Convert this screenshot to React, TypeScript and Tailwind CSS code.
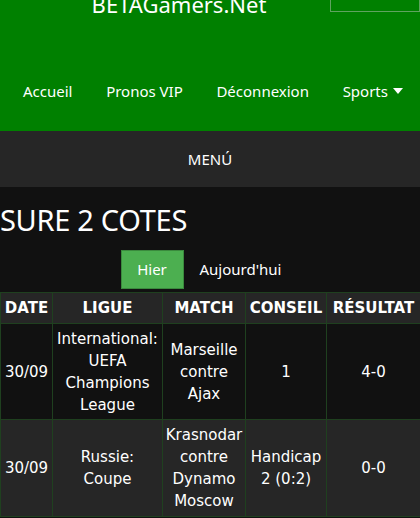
import { useState } from 'react';

const rows = [
  { date: '30/09', ligue: 'International: UEFA Champions League', match: 'Marseille contre Ajax', conseil: '1', res: '4-0' },
  { date: '30/09', ligue: 'Russie: Coupe', match: 'Krasnodar contre Dynamo Moscow', conseil: 'Handicap 2 (0:2)', res: '0-0' },
];

const cols = ['w-[52px]', 'w-[110px]', 'w-[83px]', 'w-[81px]', 'w-[94px]'];

export default function App() {
  const [tab, setTab] = useState('hier');

  return (
    <div className="w-[420px] h-[518px] overflow-hidden bg-[#111111] text-white" style={{ fontFamily: '"Noto Sans", "Open Sans", sans-serif' }}>
      {/* Header */}
      <header className="bg-[#008000] h-[131px] relative">
        <div className="absolute right-0 top-[-20px] w-[90px] h-[32px] border border-[#5fa35f]" />
        <div className="h-[80px] flex justify-center">
          <div className="mt-[-11px] pr-[62px] text-[22px] leading-[30px]">BETAGamers.Net</div>
        </div>
        <nav className="flex items-center justify-between pl-[23px] pr-[17px] text-[15px]">
          <a>Accueil</a>
          <a>Pronos VIP</a>
          <a>Déconnexion</a>
          <a className="flex items-center gap-[5px]">
            Sports
            <svg width="10" height="6" viewBox="0 0 10 6"><path d="M0 0H10L5 6Z" fill="white" /></svg>
          </a>
        </nav>
      </header>

      <div className="bg-[#262626] h-[56px] flex items-center justify-center text-[15px]">MENÚ</div>

      <h1 className="text-[29px] leading-[34px] mt-[16px] tracking-[-0.3px]">SURE 2 COTES</h1>

      <div className="flex justify-center items-center mt-[13px] pr-[18px] gap-[16px] text-[15px]">
        <button
          onClick={() => setTab('hier')}
          className={`w-[63px] h-[39px] border ${tab === 'hier' ? 'bg-[#4caf50] border-[#3a8a3d]' : 'border-transparent'}`}
        >
          Hier
        </button>
        <button onClick={() => setTab('auj')} className="h-[39px]">Aujourd'hui</button>
      </div>

      <table className="mt-[3px] w-[420px] table-fixed border-collapse text-center text-[15px] leading-[22px]" style={{ fontFamily: '"DejaVu Sans", Verdana, sans-serif' }}>
        <thead>
          <tr className="bg-[#262626] h-[31px]">
            {['DATE', 'LIGUE', 'MATCH', 'CONSEIL', 'RÉSULTAT'].map((h, i) => (
              <th key={h} className={`border border-[#1f401f] font-bold px-0 ${cols[i]}`}>{h}</th>
            ))}
          </tr>
        </thead>
        <tbody>
          {rows.map((r, i) => (
            <tr key={i} className={i % 2 ? 'bg-[#262626] h-[97px]' : 'bg-[#111111] h-[96px]'}>
              <td className="border border-[#1f401f] px-[2px]">{r.date}</td>
              <td className="border border-[#1f401f] px-[3px]">{r.ligue}</td>
              <td className="border border-[#1f401f] px-[2px]">{r.match}</td>
              <td className="border border-[#1f401f] px-[2px]">{r.conseil}</td>
              <td className="border border-[#1f401f] px-[2px]">{r.res}</td>
            </tr>
          ))}
        </tbody>
      </table>
    </div>
  );
}
